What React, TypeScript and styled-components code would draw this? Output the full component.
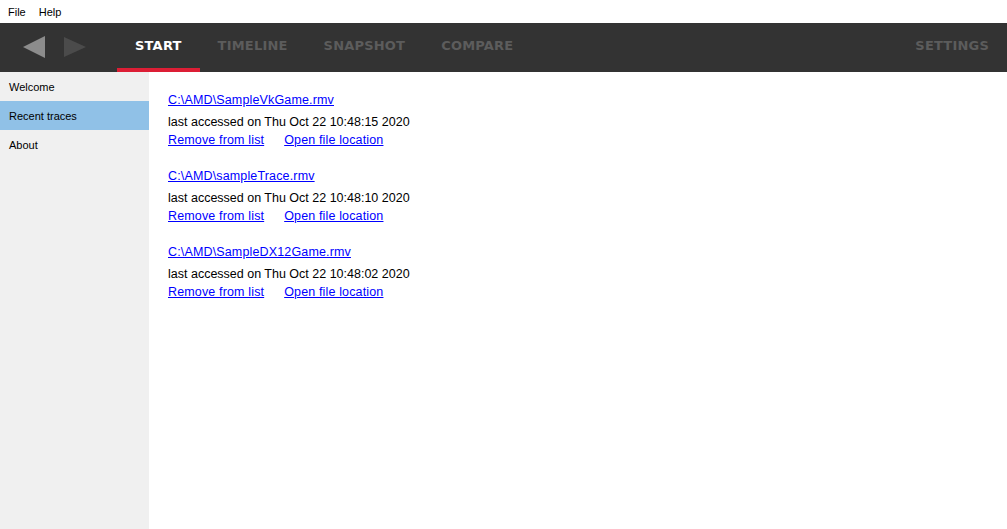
import React from "react";
import styled, { createGlobalStyle } from "styled-components";

const GlobalStyle = createGlobalStyle`
  html, body, #root {
    margin: 0;
    padding: 0;
    height: 100%;
  }
  body {
    font-family: "Liberation Sans", Arial, sans-serif;
    background: #fff;
    overflow: hidden;
  }
`;

const traces = [
  { path: "C:\\AMD\\SampleVkGame.rmv", accessed: "Thu Oct 22 10:48:15 2020" },
  { path: "C:\\AMD\\sampleTrace.rmv", accessed: "Thu Oct 22 10:48:10 2020" },
  { path: "C:\\AMD\\SampleDX12Game.rmv", accessed: "Thu Oct 22 10:48:02 2020" },
];

const tabs = ["START", "TIMELINE", "SNAPSHOT", "COMPARE"];
const pages = ["Welcome", "Recent traces", "About"];

/**
 * Recent traces start page
 */
export default function App() {
  return (
    <>
      <GlobalStyle />
      <Window>
        <MenuBar>
          <MenuItem>File</MenuItem>
          <MenuItem>Help</MenuItem>
        </MenuBar>
        <NavBar>
          <Arrows>
            <ArrowButton>
              <svg width="23" height="22" viewBox="0 0 23 22">
                <polygon points="22,0 22,22 0,11" fill="#8c8c8c" />
              </svg>
            </ArrowButton>
            <ArrowButton>
              <svg width="22" height="20" viewBox="0 0 22 20">
                <polygon points="0,0 0,20 22,10" fill="#4b4b4b" />
              </svg>
            </ArrowButton>
          </Arrows>
          <Tabs>
            {tabs.map((tab, idx) => (
              <Tab key={tab} $active={idx === 0}>
                {tab}
              </Tab>
            ))}
          </Tabs>
          <Tab>SETTINGS</Tab>
        </NavBar>
        <Body>
          <SideBar>
            {pages.map((page, idx) => (
              <SideItem key={page} $selected={idx === 1}>
                {page}
              </SideItem>
            ))}
          </SideBar>
          <Content>
            {traces.map((trace) => (
              <TraceGroup key={trace.path}>
                <PathLink>{trace.path}</PathLink>
                <Accessed>last accessed on {trace.accessed}</Accessed>
                <Actions>
                  <Link>Remove from list</Link>
                  <Link>Open file location</Link>
                </Actions>
              </TraceGroup>
            ))}
          </Content>
        </Body>
      </Window>
    </>
  );
}

const Window = styled.div`
  display: flex;
  flex-direction: column;
  width: 100%;
  height: 100vh;
`;

const MenuBar = styled.div`
  height: 23px;
  display: flex;
  align-items: center;
  padding-left: 8px;
  gap: 13px;
  background: #fff;
`;

const MenuItem = styled.span`
  font-size: 11px;
  color: #000;
`;

const NavBar = styled.div`
  height: 49px;
  background: #333333;
  display: flex;
  align-items: stretch;
`;

const Arrows = styled.div`
  display: flex;
  align-items: center;
  gap: 18px;
  padding-left: 23px;
  width: 94px;
`;

const ArrowButton = styled.div`
  display: flex;
  align-items: center;
  margin-top: -2px;
`;

const Tabs = styled.div`
  display: flex;
  flex: 1;
`;

const Tab = styled.div<{ $active?: boolean }>`
  display: flex;
  align-items: center;
  padding: 0 18px 5px;
  font-family: "DejaVu Sans", Verdana, sans-serif;
  font-size: 13px;
  font-weight: bold;
  letter-spacing: 0.2px;
  color: ${(p) => (p.$active ? "#ffffff" : "#5c5c5c")};
  box-shadow: ${(p) => (p.$active ? "inset 0 -4px 0 #dc1e35" : "none")};
`;

const Body = styled.div`
  flex: 1;
  display: flex;
`;

const SideBar = styled.div`
  width: 149px;
  background: #f0f0f0;
  display: flex;
  flex-direction: column;
`;

const SideItem = styled.div<{ $selected?: boolean }>`
  height: 29px;
  display: flex;
  align-items: center;
  padding-left: 9px;
  font-size: 11px;
  color: #000;
  background: ${(p) => (p.$selected ? "#90c1e7" : "transparent")};
`;

const Content = styled.div`
  flex: 1;
  padding: 19px 19px;
  display: flex;
  flex-direction: column;
  gap: 18px;
`;

const TraceGroup = styled.div`
  display: flex;
  flex-direction: column;
`;

const Link = styled.a`
  font-size: 12.5px;
  line-height: 18px;
  letter-spacing: 0.15px;
  color: #0000ff;
  text-decoration: underline;
  cursor: pointer;
`;

const PathLink = styled(Link)`
  margin-bottom: 4px;
`;

const Accessed = styled.div`
  font-size: 12.5px;
  line-height: 18px;
  color: #000;
`;

const Actions = styled.div`
  display: flex;
  gap: 20px;
`;
